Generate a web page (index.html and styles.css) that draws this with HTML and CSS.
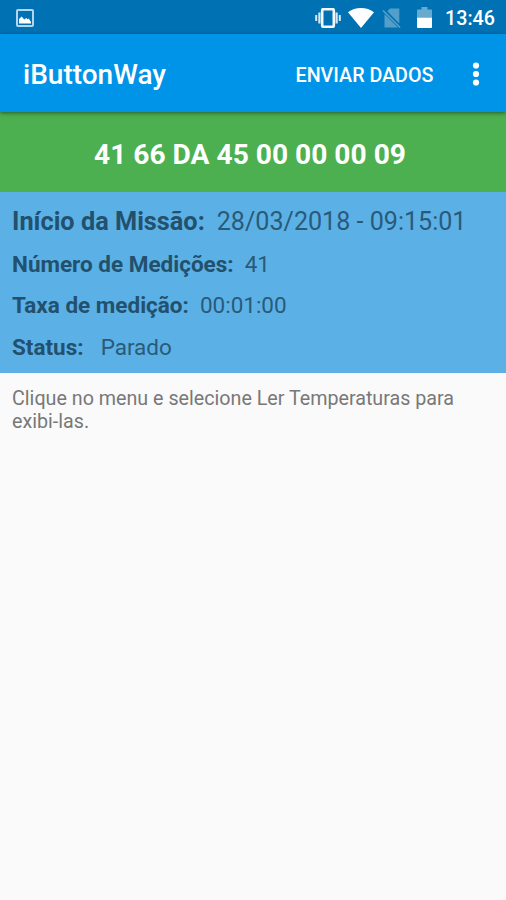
FILE: index.html
```html
<!DOCTYPE html>
<html lang="pt-BR">

<head>
    <meta charset="UTF-8">
    <meta name="viewport" content="width=device-width, initial-scale=1.0">
    <title>iButtonWay</title>
    <link rel="stylesheet" href="styles.css">
</head>

<body>
    <div class="statusbar">
        <svg class="icon-picture" width="18" height="18" viewBox="0 0 18 18">
            <rect x="1" y="1" width="16" height="16" rx="1" fill="none" stroke="#b5d5ec" stroke-width="2" />
            <path d="M3 14.500V10l2.700-2.500 2.500 3 2-1.500 1.300 1.300 1.300-.8L15 13v1.500z" fill="#fff" />
        </svg>
        <div class="status-icons">
            <svg class="icon-vibrate" width="26" height="20" viewBox="0 0 26 20">
                <rect x="7.200" y="1.200" width="11.600" height="17.600" rx="1" fill="none" stroke="#f2f8fc" stroke-width="2.600" />
                <path d="M4.400 4.500v11M21.600 4.500v11" stroke="#d5e8f4" stroke-width="2.200" />
                <path d="M1.200 7v6M24.800 7v6" stroke="#d5e8f4" stroke-width="2" />
            </svg>
            <svg class="icon-wifi" width="26" height="20" viewBox="0 0 26 20">
                <path d="M0 4.300C3.500 1.500 8 0 13 0s9.500 1.500 13 4.300L13 20z" fill="#fff" />
            </svg>
            <svg class="icon-nosim" width="20" height="20" viewBox="0 0 20 20">
                <path d="M8 .5h9.300v15L5.300 3.200zM2.500 6l13.300 13.500H2.500z" fill="#539fca" />
                <path d="M1 2.500l17 17" stroke="#539fca" stroke-width="1.700" />
            </svg>
            <svg class="icon-battery" width="15" height="21" viewBox="0 0 15 21">
                <path d="M0 3.500Q0 2.500 1 2.500h3.500V0h6v2.500H14q1 0 1 1V11H0z" fill="#68a9d0" />
                <path d="M0 10.700h15V20q0 1-1 1H1q-1 0-1-1z" fill="#fff" />
            </svg>
            <span class="clock">13:46</span>
        </div>
    </div>

    <div class="toolbar">
        <h1 class="title">iButtonWay</h1>
        <button class="action">ENVIAR DADOS</button>
        <button class="menu">
            <svg width="6" height="24" viewBox="0 0 6 24">
                <circle cx="3" cy="2.500" r="3.100" fill="#fff" />
                <circle cx="3" cy="11" r="3.100" fill="#fff" />
                <circle cx="3" cy="19.500" r="3.100" fill="#fff" />
            </svg>
        </button>
    </div>

    <div class="device"><span class="device-id">41 66 DA 45 00 00 00 09</span></div>

    <div class="mission">
        <div class="row start">
            <span class="label">Início da Missão:</span>
            <span class="value">28/03/2018 - 09:15:01</span>
        </div>
        <div class="row count">
            <span class="label">Número de Medições:</span>
            <span class="value">41</span>
        </div>
        <div class="row rate">
            <span class="label">Taxa de medição:</span>
            <span class="value">00:01:00</span>
        </div>
        <div class="row status">
            <span class="label">Status:</span>
            <span class="value">Parado</span>
        </div>
    </div>

    <p class="hint">Clique no menu e selecione Ler Temperaturas para exibi-las.</p>
</body>

</html>
```

FILE: styles.css
```css
* {
    margin: 0;
    padding: 0;
    box-sizing: border-box;
}

body {
    min-height: 100vh;
    background-color: #fafafa;
    font-family: Roboto, "Liberation Sans", sans-serif;
}

/* Status bar */
.statusbar {
    height: 34px;
    padding: 1px 11px 0 16px;
    display: flex;
    justify-content: space-between;
    align-items: center;
    background-color: #0072b3;
}

.status-icons {
    display: flex;
    align-items: center;
}

.icon-vibrate {
    margin-right: 7px;
}

.icon-nosim {
    margin-left: 8px;
}

.icon-battery {
    margin-left: 15px;
}

.clock {
    width: 50px;
    margin-left: 13px;
    padding-top: 2px;
    color: #fff;
    font-size: 19.7px;
    font-weight: 500;
    line-height: 24px;
    white-space: nowrap;
}

/* App bar */
.toolbar {
    position: relative;
    height: 78px;
    padding: 3px 27px 0 23px;
    display: flex;
    align-items: center;
    background-color: #0094e8;
    box-shadow: 0 1px 4px rgba(0, 0, 0, .5);
    color: #fff;
}

.title {
    flex: 1;
    font-size: 28px;
    font-weight: 500;
}

.toolbar button {
    border: none;
    background: none;
    color: #fff;
    font-family: inherit;
}

.toolbar .action {
    width: 139px;
    padding-top: 1px;
    font-size: 19.7px;
    font-weight: 500;
    white-space: nowrap;
}

.toolbar .menu {
    margin-left: 39px;
    display: flex;
}

.menu svg {
    overflow: visible;
}

/* Device address */
.device {
    height: 80px;
    padding: 4px 6px 0 0;
    display: flex;
    justify-content: center;
    align-items: center;
    background-color: #4caf50;
    color: #fff;
    font-size: 28.15px;
    font-weight: 700;
}

/* Mission data */
.mission {
    height: 181px;
    padding: 7px 12px 0;
    background-color: #5bb1e6;
    color: #23506c;
}

.row {
    height: 41.5px;
    display: flex;
    align-items: center;
    gap: 11px;
    font-size: 22.5px;
    white-space: nowrap;
}

.row.start {
    height: 44px;
    gap: 12px;
    font-size: 25.3px;
}

.row.start .value {
    font-size: 25.1px;
}

.row.status {
    gap: 17px;
}

.label {
    font-weight: 700;
}

.value {
    color: #2a5a78;
}

.hint {
    padding: 14px 12px;
    color: #787878;
    font-size: 19.7px;
    line-height: 23px;
}
```
